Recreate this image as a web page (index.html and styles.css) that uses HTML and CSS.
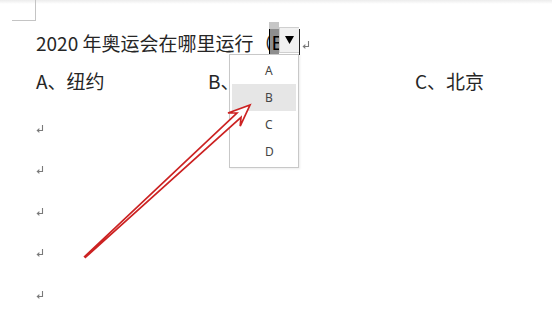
FILE: index.html
```html
<!DOCTYPE html>
<html lang="zh-CN">
<head>
<meta charset="utf-8">
<title>选择题</title>
<link rel="stylesheet" href="styles.css">
</head>
<body>
<div class="page">
  <div class="corner"></div>
  <div class="line q">
    <span class="txt">2020 年奥运会在哪里运行（</span>
    <span class="field"><span class="field-top"></span><span class="field-val">B</span></span>
    <span class="btn"><svg width="9" height="8" viewBox="0 0 9 8"><path d="M0 0 H9 L4.5 8 Z" fill="#000"/></svg></span>
    <span class="caret"></span>
    <svg class="pm pm-q" width="8" height="8" viewBox="0 0 8 8"><path d="M6.5 0 V5.5 H1.5 M3.4 3.6 L1.3 5.5 L3.4 7.4" fill="none" stroke="#7a7a7a" stroke-width="1.1"/></svg>
  </div>
  <div class="line opts">
    <span class="opt opt-a">A、纽约</span>
    <span class="opt opt-b">B、</span>
    <span class="opt opt-c">C、北京</span>
  </div>
  <div class="blanks">
    <div class="blank"><svg class="pm" width="8" height="8" viewBox="0 0 8 8"><path d="M6.5 0 V5.5 H1.5 M3.4 3.6 L1.3 5.5 L3.4 7.4" fill="none" stroke="#7a7a7a" stroke-width="1.1"/></svg></div>
    <div class="blank"><svg class="pm" width="8" height="8" viewBox="0 0 8 8"><path d="M6.5 0 V5.5 H1.5 M3.4 3.6 L1.3 5.5 L3.4 7.4" fill="none" stroke="#7a7a7a" stroke-width="1.1"/></svg></div>
    <div class="blank"><svg class="pm" width="8" height="8" viewBox="0 0 8 8"><path d="M6.5 0 V5.5 H1.5 M3.4 3.6 L1.3 5.5 L3.4 7.4" fill="none" stroke="#7a7a7a" stroke-width="1.1"/></svg></div>
    <div class="blank"><svg class="pm" width="8" height="8" viewBox="0 0 8 8"><path d="M6.5 0 V5.5 H1.5 M3.4 3.6 L1.3 5.5 L3.4 7.4" fill="none" stroke="#7a7a7a" stroke-width="1.1"/></svg></div>
    <div class="blank"><svg class="pm" width="8" height="8" viewBox="0 0 8 8"><path d="M6.5 0 V5.5 H1.5 M3.4 3.6 L1.3 5.5 L3.4 7.4" fill="none" stroke="#7a7a7a" stroke-width="1.1"/></svg></div>
  </div>

  <ul class="dropdown">
    <li class="item">A</li>
    <li class="item active">B</li>
    <li class="item">C</li>
    <li class="item">D</li>
  </ul>

  <svg class="arrow" width="552" height="323" viewBox="0 0 552 323">
    <polygon points="84.6,256.6 236.9,113 228,113 250,105 240.2,126.2 241,117.4 85.4,257.4" fill="#fff" stroke="#cc2222" stroke-width="1.7" stroke-linejoin="miter"/>
  </svg>
</div>
</body>
</html>
```
FILE: styles.css
```css
html, body {
  margin: 0;
  padding: 0;
}
body {
  width: 552px;
  height: 323px;
  overflow: hidden;
  background: linear-gradient(#ececec 0, #ffffff 4px);
  font-family: "Noto Sans CJK SC", "Noto Sans", sans-serif;
  color: #262626;
}
.page {
  position: relative;
  width: 552px;
  height: 323px;
}
.corner {
  width: 24px;
  height: 21px;
  margin-left: 12px;
  border-right: 1px solid #c4c4c4;
  border-bottom: 1px solid #c4c4c4;
  box-sizing: border-box;
}
.line {
  display: flex;
  padding-left: 36px;
  font-size: 19px;
  white-space: nowrap;
}
.q {
  height: 44px;
  align-items: flex-start;
}
.txt {
  line-height: 44px;
  margin-right: -3px;
}
.field {
  display: flex;
  flex-direction: column;
  width: 10px;
  margin-top: 1px;
}
.field-top {
  height: 7px;
  background: #c6c6c6;
}
.field-val {
  height: 26px;
  background: #8e8e8e;
  border-left: 1px solid #000;
  box-sizing: border-box;
  line-height: 26px;
  font-size: 19px;
  color: #000;
  padding-left: 1px;
  overflow: visible;
}
.btn {
  width: 20px;
  height: 26px;
  margin-top: 6px;
  box-sizing: border-box;
  background: #f1f1f1;
  border: 1px solid #cfcfcf;
  border-right: none;
  display: flex;
  align-items: center;
  justify-content: center;
}
.caret {
  width: 1px;
  height: 26px;
  margin-top: 8px;
  background: #222;
}
.pm-q {
  margin-top: 20px;
  margin-left: 2px;
}
.opts {
  height: 32px;
  line-height: 32px;
}
.opt-a { width: 172px; }
.opt-b { width: 207px; }
.blanks {
  margin-top: 11px;
  padding-left: 36px;
}
.blank {
  height: 41.5px;
  display: flex;
  align-items: center;
}
.pm {
  display: block;
}
.dropdown {
  position: absolute;
  left: 229px;
  top: 54px;
  width: 70px;
  margin: 0;
  padding: 2px 2px;
  box-sizing: border-box;
  list-style: none;
  background: #fff;
  border: 1px solid #c8c8c8;
  box-shadow: 1px 1px 2px rgba(0, 0, 0, 0.08);
}
.item {
  height: 27px;
  line-height: 27px;
  padding-left: 33px;
  font-size: 12px;
  font-family: "Noto Sans", "Noto Sans CJK SC", sans-serif;
  color: #444;
}
.item.active {
  background: #e6e6e6;
}
.arrow {
  position: absolute;
  left: 0;
  top: 0;
  pointer-events: none;
}
```
